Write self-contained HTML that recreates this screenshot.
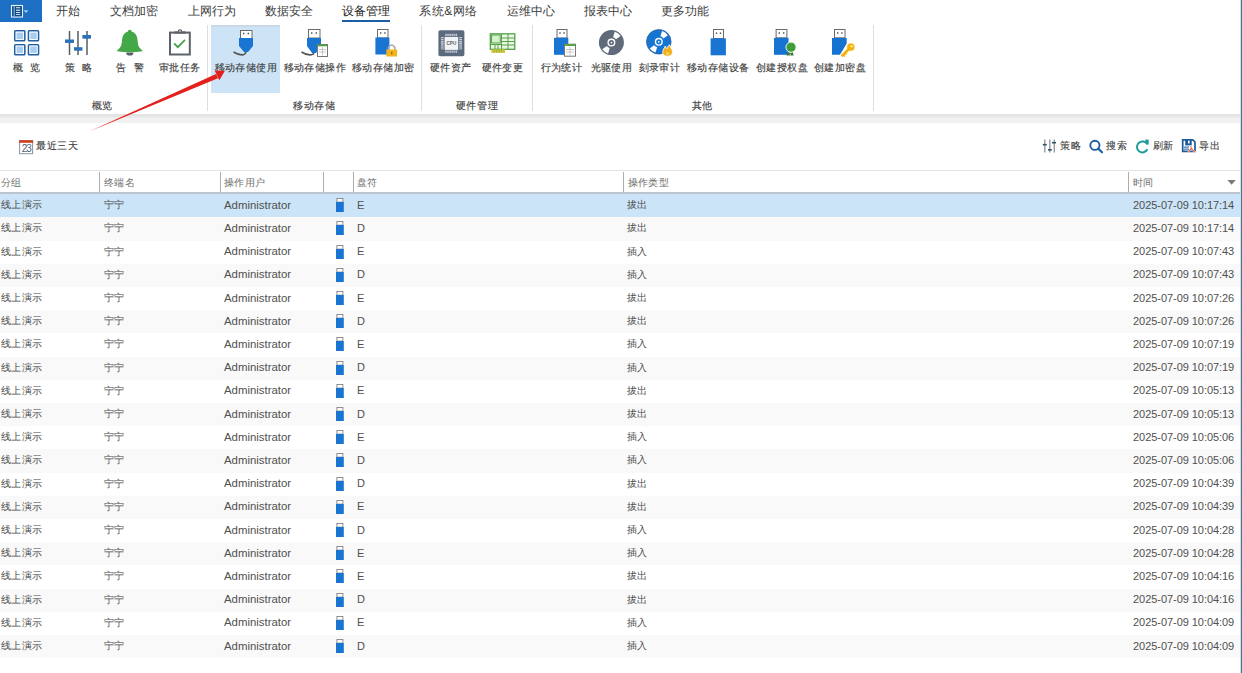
<!DOCTYPE html>
<html><head><meta charset="utf-8">
<style>
*{margin:0;padding:0;box-sizing:border-box}
html,body{width:1242px;height:673px;overflow:hidden;background:#fff}
body{position:relative;font-family:"Liberation Sans",sans-serif;color:#454545}
.a{position:absolute;white-space:nowrap;line-height:1}
.tab{font-size:12px;top:5px;color:#3c3c3c}
.lb{font-size:10px;letter-spacing:.45px;top:62.5px;color:#404040;-webkit-text-stroke:.15px #404040}
.gl{font-size:10px;letter-spacing:.7px;top:100.5px;color:#404040;-webkit-text-stroke:.15px #404040}
.sep{position:absolute;top:25px;width:1px;height:85.5px;background:#dedede}
svg{position:absolute;overflow:visible}
.hd{font-size:10px;letter-spacing:.4px;top:178px;color:#6e6e6e}
.cs{position:absolute;top:172px;width:1px;height:19.7px;background:#adadad}
.row{position:absolute;left:0;width:1240px;height:23.2px}
.row{color:#4a4a4a}.row .a{top:6px}

.sel{background:#cce4f7}.alt{background:#f9f9f9}
.us{left:336px;top:4px}
.c1{left:1px;font-size:10px;letter-spacing:.4px}
.c2{left:104px;font-size:10px;letter-spacing:.4px}
.row .c3{left:224px;font-size:11.4px;top:5.5px;color:#505050}
.row .c5{left:357px;font-size:11px;top:5.5px;color:#505050}
.c6{left:627px;font-size:10px;letter-spacing:.4px}
.row .c7{left:1133px;font-size:11px;top:5.5px;color:#505050;letter-spacing:-.05px}
</style></head><body>

<!-- top app button -->
<div class="a" style="left:0;top:0;width:42px;height:22px;background:#1d6fc4"></div>
<svg style="left:0;top:0" width="42" height="22">
  <rect x="11.5" y="5.5" width="11" height="11.5" fill="#0f4a86" stroke="#e6f3ff" stroke-width="1.1"/>
  <rect x="13.7" y="6" width="0.9" height="10.5" fill="#a8d2f5"/>
  <g fill="#d9e6f0"><rect x="16" y="7.2" width="4.2" height="1"/><rect x="16" y="9.6" width="4.2" height="1.2"/><rect x="16" y="12" width="4.2" height="1"/><rect x="16" y="14.1" width="4.2" height="0.9"/></g>
  <path d="M23.6 10.2 L28.4 10.2 L26 12.9 Z" fill="#9fd0f7"/>
</svg>

<!-- tabs -->
<div class="a tab" style="left:55.5px">开始</div>
<div class="a tab" style="left:110px">文档加密</div>
<div class="a tab" style="left:187.5px">上网行为</div>
<div class="a tab" style="left:264.5px">数据安全</div>
<div class="a tab" style="left:341.5px;color:#222">设备管理</div>
<div class="a" style="left:342px;top:19.5px;width:48px;height:2.5px;background:#1b5ea6"></div>
<div class="a tab" style="left:419px;letter-spacing:.6px">系统&amp;网络</div>
<div class="a tab" style="left:506.5px">运维中心</div>
<div class="a tab" style="left:584px">报表中心</div>
<div class="a tab" style="left:660.5px">更多功能</div>

<!-- highlight -->
<div class="a" style="left:211.2px;top:25px;width:68.9px;height:68.2px;background:#cde4f7;border-top:2.2px solid #c9d9e7"></div>

<!-- separators -->
<div class="sep" style="left:207px"></div>
<div class="sep" style="left:420.5px"></div>
<div class="sep" style="left:532px"></div>
<div class="sep" style="left:873px"></div>

<!-- ribbon icons -->
<!-- grid -->
<svg style="left:14px;top:30px" width="26" height="26">
  <rect x="0.75" y="0.75" width="10.1" height="10.1" rx="0.8" fill="#a9cdf1" stroke="#225f9f" stroke-width="1.5"/>
  <rect x="2.1" y="2.1" width="7.4" height="7.4" fill="none" stroke="#fff" stroke-width="0.9"/>
  <rect x="14.45" y="0.75" width="10.1" height="10.1" rx="0.8" fill="#a9cdf1" stroke="#225f9f" stroke-width="1.5"/>
  <rect x="15.799999999999999" y="2.1" width="7.4" height="7.4" fill="none" stroke="#fff" stroke-width="0.9"/>
  <rect x="0.75" y="14.65" width="10.1" height="10.1" rx="0.8" fill="#a9cdf1" stroke="#225f9f" stroke-width="1.5"/>
  <rect x="2.1" y="16.0" width="7.4" height="7.4" fill="none" stroke="#fff" stroke-width="0.9"/>
  <rect x="14.45" y="14.65" width="10.1" height="10.1" rx="0.8" fill="#a9cdf1" stroke="#225f9f" stroke-width="1.5"/>
  <rect x="15.799999999999999" y="16.0" width="7.4" height="7.4" fill="none" stroke="#fff" stroke-width="0.9"/>
</svg>
<!-- sliders -->
<svg style="left:64px;top:30px" width="28" height="26">
  <g stroke="#555c64" stroke-width="1.5">
    <line x1="5.5" y1="1" x2="5.5" y2="25"/>
    <line x1="14" y1="1" x2="14" y2="25"/>
    <line x1="23" y1="1" x2="23" y2="25"/>
  </g>
  <g fill="#2a71b9">
    <rect x="1" y="9.5" width="9" height="3.4"/>
    <rect x="10" y="17.2" width="8.4" height="3.5"/>
    <rect x="18.4" y="5" width="8.6" height="3.7"/>
  </g>
</svg>
<!-- bell -->
<svg style="left:116px;top:29px" width="28" height="28">
  <path d="M10.2 23.4 A3.6 3.2 0 0 0 17.4 23.4 Z" fill="#5a6068"/>
  <path d="M13.8 0.8 C15 0.8 15.6 1.6 15.6 2.5 C19.6 3.6 21.3 7 21.6 11.5 C21.9 16.5 23 19 26.5 21.5 L26.5 22.3 Q13.8 24 1 22.3 L1 21.5 C4.5 19 5.7 16.5 6 11.5 C6.3 7 8 3.6 12 2.5 C12 1.6 12.6 0.8 13.8 0.8 Z" fill="#45a848"/>
</svg>
<!-- clipboard -->
<svg style="left:168px;top:29px" width="24" height="28">
  <rect x="2" y="3.6" width="19.8" height="21.9" fill="#fff" stroke="#5d626a" stroke-width="2"/>
  <rect x="6.2" y="2.4" width="11.6" height="2.2" fill="#5d626a"/>
  <path d="M9.6 2.6 A2.4 2.4 0 0 1 14.4 2.6 Z" fill="#5d626a"/>
  <circle cx="12" cy="2" r="0.7" fill="#fff"/>
  <path d="M6.2 14.3 L9.8 18.2 L17 10.8" fill="none" stroke="#3fa346" stroke-width="1.7"/>
</svg>

<!-- usb with cable (selected) -->
<svg style="left:228px;top:25px" width="32" height="35">
  <rect x="12.5" y="5.5" width="11.5" height="8" fill="#fff" stroke="#6a6a6a" stroke-width="1"/>
  <rect x="15" y="7.8" width="1.4" height="1.4" fill="#444"/>
  <rect x="19.6" y="7.8" width="1.4" height="1.4" fill="#444"/>
  <path d="M11 13 L25 13 L25 21 L20 27 L16 27 L11 21 Z" fill="#1a74d2"/>
  <path d="M5.5 27 Q11 30.5 15.5 29.8 Q17.5 29.3 18 27" fill="none" stroke="#555" stroke-width="1.6"/>
</svg>
<!-- usb with cable + sheet -->
<svg style="left:300px;top:25px" width="32" height="35">
  <rect x="8.5" y="4.5" width="11.5" height="8.5" fill="#fff" stroke="#6a6a6a" stroke-width="1"/>
  <rect x="11" y="7.3" width="1.4" height="1.4" fill="#444"/>
  <rect x="15.6" y="7.3" width="1.4" height="1.4" fill="#444"/>
  <path d="M7 13 L21 13 L21 21 L16 28 L12 28 L7 21 Z" fill="#1a74d2"/>
  <path d="M1.5 27 Q7 30.5 11.5 29.8 Q13.5 29.3 14 28" fill="none" stroke="#555" stroke-width="1.6"/>
  <rect x="17.5" y="19.5" width="10" height="12" fill="#fff" stroke="#777" stroke-width="1"/>
  <rect x="17.5" y="19.5" width="10" height="1.8" fill="#53a13f"/>
  <g stroke="#bbb" stroke-width="0.8"><line x1="22.5" y1="22" x2="22.5" y2="30.5"/><line x1="19" y1="24.5" x2="26" y2="24.5"/><line x1="19" y1="27" x2="26" y2="27"/></g>
</svg>
<!-- usb + lock -->
<svg style="left:372px;top:25px" width="30" height="35">
  <rect x="5.5" y="4.5" width="10.5" height="8.5" fill="#fff" stroke="#6a6a6a" stroke-width="1"/>
  <rect x="8" y="7.3" width="1.4" height="1.4" fill="#444"/>
  <rect x="12.2" y="7.3" width="1.4" height="1.4" fill="#444"/>
  <rect x="3.4" y="12.5" width="14" height="17" fill="#1a74d2"/>
  <path d="M16.5 25 L16.5 22.5 Q19.7 17.5 22.9 22.5 L22.9 25" fill="none" stroke="#a9a9a9" stroke-width="1.6"/>
  <rect x="14.3" y="24.5" width="10.8" height="7" fill="#f2b51c"/>
  <rect x="19.2" y="26.8" width="1.1" height="2.4" fill="#8a5a00"/>
</svg>

<!-- cpu -->
<svg style="left:438px;top:30px" width="27" height="27">
  <rect x="0.4" y="0.2" width="26" height="26" rx="1.8" fill="#5c6a7e"/>
  <g stroke="#e2e7ee" stroke-dasharray="1.1 0.95">
    <line x1="7.4" y1="4.9" x2="19.8" y2="4.9" stroke-width="2.4"/>
    <line x1="7.4" y1="21.6" x2="19.8" y2="21.6" stroke-width="2.4"/>
    <line x1="4.3" y1="7.2" x2="4.3" y2="19.8" stroke-width="2.8"/>
    <line x1="22.6" y1="7.2" x2="22.6" y2="19.8" stroke-width="2.8"/>
  </g>
  <rect x="6.6" y="6.9" width="13.6" height="13" fill="#f1f4f7"/>
  <text x="13.4" y="15.3" font-size="4.6" font-family="Liberation Sans" text-anchor="middle" fill="#5a5f66" font-weight="bold">CPU</text>
</svg>
<!-- board -->
<svg style="left:489px;top:33px" width="28" height="21">
  <rect x="1.3" y="0.8" width="24.5" height="15.5" fill="#e8f6e2" stroke="#4a9a3c" stroke-width="1.2"/>
  <rect x="2.6" y="2" width="8.6" height="8" fill="#d6efcc" stroke="#4a9a3c" stroke-width="0.9"/>
  <g stroke="#4a9a3c" stroke-width="0.9" fill="none">
    <line x1="12.5" y1="1" x2="12.5" y2="16"/>
    <line x1="19" y1="1" x2="19" y2="16"/>
    <line x1="12.5" y1="5" x2="25.5" y2="5"/>
    <line x1="12.5" y1="8.5" x2="25.5" y2="8.5"/>
    <line x1="12.5" y1="12" x2="25.5" y2="12"/>
    <line x1="1.5" y1="11.5" x2="12.5" y2="11.5"/>
    <line x1="6" y1="11.5" x2="6" y2="16"/>
    <line x1="9" y1="11.5" x2="9" y2="16"/>
  </g>
  <rect x="2.5" y="16.3" width="13.5" height="3.5" fill="#c9c63a"/>
  <g stroke="#8fa52a" stroke-width="0.6"><line x1="5" y1="16.5" x2="5" y2="19.5"/><line x1="7.5" y1="16.5" x2="7.5" y2="19.5"/><line x1="10" y1="16.5" x2="10" y2="19.5"/><line x1="12.5" y1="16.5" x2="12.5" y2="19.5"/></g>
</svg>

<!-- usb + sheet -->
<svg style="left:550px;top:25px" width="30" height="35">
  <rect x="7" y="4.5" width="10" height="8.5" fill="#fff" stroke="#6a6a6a" stroke-width="1"/>
  <rect x="9.3" y="7.3" width="1.4" height="1.4" fill="#444"/>
  <rect x="13.3" y="7.3" width="1.4" height="1.4" fill="#444"/>
  <rect x="4" y="12.8" width="14.3" height="17" fill="#1a74d2"/>
  <rect x="14.5" y="19.2" width="11" height="12" fill="#fff" stroke="#777" stroke-width="1"/>
  <rect x="14.5" y="19.2" width="11" height="1.8" fill="#53a13f"/>
  <g stroke="#bbb" stroke-width="0.8"><line x1="20" y1="22" x2="20" y2="30.5"/><line x1="16" y1="24.5" x2="24" y2="24.5"/><line x1="16" y1="27" x2="24" y2="27"/></g>
</svg>
<!-- disc gray -->
<svg style="left:598px;top:30px" width="27" height="26">
  <circle cx="13.4" cy="12.6" r="12.5" fill="#5f6a7a"/>
  <path d="M15.07 7.15 L16.70 1.79 A11.3 11.3 0 0 1 22.54 5.96 L18.01 9.25 A5.7 5.7 0 0 0 15.07 7.15 Z" fill="#fff"/>
  <path d="M11.73 18.05 L10.10 23.41 A11.3 11.3 0 0 1 4.26 19.24 L8.79 15.95 A5.7 5.7 0 0 0 11.73 18.05 Z" fill="#fff"/>
  <circle cx="13.4" cy="12.6" r="4" fill="#fff"/>
  <circle cx="13.4" cy="12.6" r="2.6" fill="#5f6a7a"/>
  <circle cx="13.4" cy="12.6" r="0.9" fill="#fff"/>
</svg>
<!-- disc blue + flame -->
<svg style="left:645px;top:29px" width="30" height="28">
  <circle cx="13.8" cy="12.8" r="12.3" fill="#1675d3" stroke="#2a5b8c" stroke-width="0.7"/>
  <path d="M15.47 7.35 L17.07 2.09 A11.2 11.2 0 0 1 22.86 6.22 L18.41 9.45 A5.7 5.7 0 0 0 15.47 7.35 Z" fill="#fff"/>
  <path d="M12.13 18.25 L10.53 23.51 A11.2 11.2 0 0 1 4.74 19.38 L9.19 16.15 A5.7 5.7 0 0 0 12.13 18.25 Z" fill="#fff"/>
  <circle cx="13.8" cy="12.8" r="4" fill="#fff"/>
  <circle cx="13.8" cy="12.8" r="2.6" fill="#1675d3"/>
  <circle cx="13.8" cy="12.8" r="0.9" fill="#fff"/>
  <path d="M22.5 27.3 C18.5 27.3 17 24.5 18 21.5 C18.8 19.5 19.5 18.5 20.5 17 C21 19 21.5 19.5 22 19.8 C22.5 18 23.5 16.5 24.5 15.8 C25 18 26.5 19 27.2 21 C28.3 24.3 26.5 27.3 22.5 27.3 Z" fill="#f2ae1c" stroke="#fff" stroke-width="0.9"/>
  <path d="M22.7 26.3 C21 26.3 20.3 25 21 23.3 C21.6 24 22 23.8 22.3 22.5 C23.5 23.3 24.6 24.3 24.4 25.2 C24.2 26 23.5 26.3 22.7 26.3 Z" fill="#f7cf55"/>
</svg>
<!-- usb plain -->
<svg style="left:708px;top:25px" width="22" height="35">
  <rect x="5.5" y="4.5" width="10" height="9" fill="#fff" stroke="#6a6a6a" stroke-width="1"/>
  <rect x="7.8" y="7.5" width="1.4" height="1.4" fill="#444"/>
  <rect x="11.8" y="7.5" width="1.4" height="1.4" fill="#444"/>
  <rect x="2.6" y="13.3" width="15.3" height="17" fill="#1a74d2"/>
</svg>
<!-- usb + medal -->
<svg style="left:772px;top:25px" width="28" height="35">
  <rect x="4.1" y="4.5" width="10.8" height="8.3" fill="#fff" stroke="#6a6a6a" stroke-width="1"/>
  <rect x="6.6" y="7.3" width="1.4" height="1.4" fill="#444"/>
  <rect x="11" y="7.3" width="1.4" height="1.4" fill="#444"/>
  <rect x="2" y="12.9" width="14.5" height="16.9" fill="#1673d2"/>
  <path d="M15.2 27 L14.6 30.8 L16.4 30.2 L17.3 31.2 L18.3 27.5 Z M21 27 L21.6 30.8 L19.8 30.2 L18.9 31.2 L17.9 27.5 Z" fill="#3d7a3a"/>
  <circle cx="19" cy="22.2" r="5.1" fill="#3e9e3a" stroke="#fff" stroke-width="0.9"/>
</svg>
<!-- usb + key -->
<svg style="left:830px;top:25px" width="28" height="35">
  <rect x="4.5" y="4.5" width="10.5" height="8.3" fill="#fff" stroke="#6a6a6a" stroke-width="1"/>
  <rect x="7" y="7.3" width="1.4" height="1.4" fill="#444"/>
  <rect x="11.2" y="7.3" width="1.4" height="1.4" fill="#444"/>
  <path d="M2 12.9 L16.7 12.9 L16.7 18.5 L10 29.8 L2 29.8 Z" fill="#1673d2"/>
  <line x1="19.5" y1="23.5" x2="11.6" y2="31.2" stroke="#fff" stroke-width="4.2"/>
  <circle cx="20.8" cy="22.1" r="4.1" fill="#f3b20a" stroke="#fff" stroke-width="0.8"/>
  <line x1="19.5" y1="23.5" x2="11.6" y2="31.2" stroke="#f3b20a" stroke-width="2.6"/>
  <path d="M13.2 29.6 L15 31.4 M15 27.8 L16.6 29.4" stroke="#f3b20a" stroke-width="1.4"/>
  <circle cx="21.6" cy="21.2" r="1.2" fill="#fde48a"/>
</svg>

<!-- ribbon labels -->
<div class="a lb" style="left:12.5px;letter-spacing:.75px">概&nbsp;&nbsp;览</div>
<div class="a lb" style="left:64.5px;letter-spacing:.75px">策&nbsp;&nbsp;略</div>
<div class="a lb" style="left:116px;letter-spacing:.75px">告&nbsp;&nbsp;警</div>
<div class="a lb" style="left:159px">审批任务</div>
<div class="a lb" style="left:214.5px">移动存储使用</div>
<div class="a lb" style="left:283.5px">移动存储操作</div>
<div class="a lb" style="left:352px">移动存储加密</div>
<div class="a lb" style="left:430px">硬件资产</div>
<div class="a lb" style="left:481.5px">硬件变更</div>
<div class="a lb" style="left:540.5px">行为统计</div>
<div class="a lb" style="left:590.5px">光驱使用</div>
<div class="a lb" style="left:638.5px">刻录审计</div>
<div class="a lb" style="left:687px">移动存储设备</div>
<div class="a lb" style="left:756px">创建授权盘</div>
<div class="a lb" style="left:814px">创建加密盘</div>

<!-- group labels -->
<div class="a gl" style="left:91.5px">概览</div>
<div class="a gl" style="left:293px">移动存储</div>
<div class="a gl" style="left:455.5px">硬件管理</div>
<div class="a gl" style="left:691.5px">其他</div>

<!-- gray band -->
<div class="a" style="left:0;top:113.7px;width:1240px;height:9.3px;background:linear-gradient(#e3e3e3 0,#e5e5e5 2.3px,#ececec 3.6px,#f1f1f1 4.2px,#f1f1f1 8.3px,#f8f8f8 9.3px)"></div>

<!-- toolbar -->
<svg style="left:18px;top:139px" width="16" height="16">
  <rect x="1.6" y="1.7" width="13" height="13" fill="#fff" stroke="#8893a0" stroke-width="1"/>
  <rect x="1.1" y="1.2" width="14" height="2.6" fill="#cf3f26"/>
  <text x="8.3" y="13.1" font-size="10" font-family="Liberation Sans" text-anchor="middle" fill="#4f6478" letter-spacing="-1">23</text>
</svg>
<div class="a" style="left:36px;top:141px;font-size:10px;letter-spacing:.6px;color:#3c3c3c;-webkit-text-stroke:.1px #3c3c3c">最近三天</div>

<svg style="left:1042px;top:139px" width="15" height="15">
  <g stroke="#8d939a" stroke-width="1.3"><line x1="2.8" y1="0.6" x2="2.8" y2="13.6"/><line x1="7.8" y1="0.6" x2="7.8" y2="13.6"/><line x1="12.3" y1="0.6" x2="12.3" y2="13.6"/></g>
  <g fill="#2f5670"><rect x="0.8" y="4.9" width="4" height="1.6"/><rect x="6" y="10" width="3.8" height="1.6"/><rect x="10" y="2.9" width="4" height="1.6"/></g>
</svg>
<div class="a" style="left:1060px;top:141px;font-size:10px;letter-spacing:.6px;color:#3c3c3c;-webkit-text-stroke:.1px #3c3c3c">策略</div>
<svg style="left:1088px;top:139px" width="16" height="15">
  <circle cx="6.9" cy="6.3" r="4.6" fill="none" stroke="#1f5fa0" stroke-width="1.9"/>
  <line x1="10.2" y1="9.6" x2="14" y2="13.2" stroke="#1f5fa0" stroke-width="2.2" stroke-linecap="round"/>
</svg>
<div class="a" style="left:1106px;top:141px;font-size:10px;letter-spacing:.6px;color:#3c3c3c;-webkit-text-stroke:.1px #3c3c3c">搜索</div>
<svg style="left:1135px;top:139px" width="15" height="15">
  <path d="M12.3 5.3 A5.5 5.5 0 1 0 12.4 10.3" fill="none" stroke="#1e9b9d" stroke-width="2"/>
  <path d="M10 0.6 L13.8 0.8 L13.5 5.9 L11.5 5 Z" fill="#1e9b9d"/>
</svg>
<div class="a" style="left:1152.5px;top:141px;font-size:10px;letter-spacing:.6px;color:#3c3c3c;-webkit-text-stroke:.1px #3c3c3c">刷新</div>
<svg style="left:1181px;top:138px" width="16" height="16">
  <path d="M1.7 1.8 L11.8 1.8 L14 4 L14 13.3 L1.7 13.3 Z" fill="#fff" stroke="#1d5a9c" stroke-width="1.7"/>
  <rect x="4.2" y="1.8" width="6.5" height="5.6" fill="#1d5a9c"/>
  <rect x="7" y="2.6" width="1.6" height="2.8" fill="#fff"/>
  <rect x="3" y="8.6" width="5" height="1" fill="#1d5a9c"/>
  <rect x="3" y="10.6" width="5" height="1" fill="#1d5a9c"/>
  <path d="M6 14.5 L9.5 10.3 L9.2 7.8 L10.6 7.8 L11 10.3 L15 14 L13.5 14.3 L10.3 11.8 L7.8 14.7 Z" fill="#d9553a" stroke="#fff" stroke-width="0.5"/>
</svg>
<div class="a" style="left:1199px;top:141px;font-size:10px;letter-spacing:.6px;color:#3c3c3c;-webkit-text-stroke:.1px #3c3c3c">导出</div>

<!-- table header -->
<div class="a" style="left:0;top:170px;width:1240px;height:1px;background:#e2e2e2"></div>
<div class="a" style="left:0;top:192.4px;width:1240px;height:2px;background:#bcc5cf"></div>
<div class="cs" style="left:99px"></div>
<div class="cs" style="left:220px"></div>
<div class="cs" style="left:323px"></div>
<div class="cs" style="left:353px"></div>
<div class="cs" style="left:623px"></div>
<div class="cs" style="left:1128px"></div>
<div class="a hd" style="left:1px">分组</div>
<div class="a hd" style="left:104px">终端名</div>
<div class="a hd" style="left:224px">操作用户</div>
<div class="a hd" style="left:357px">盘符</div>
<div class="a hd" style="left:627.5px">操作类型</div>
<div class="a hd" style="left:1132.5px">时间</div>
<svg style="left:1227px;top:180px" width="10" height="6"><path d="M0.4 0 L8.8 0 L4.6 4.7 Z" fill="#7a7a7a"/></svg>


<div class="row sel" style="top:194.20px"><div class="a c1">线上演示</div><div class="a c2">宁宁</div><div class="a c3">Administrator</div><svg class="us" width="8" height="14"><rect x="0.9" y="0.5" width="6" height="3.6" fill="#fff" stroke="#777" stroke-width="0.8"/><rect x="0" y="4" width="7.8" height="10" fill="#1a74d2"/></svg><div class="a c5">E</div><div class="a c6">拔出</div><div class="a c7">2025-07-09 10:17:14</div></div>
<div class="row alt" style="top:217.40px"><div class="a c1">线上演示</div><div class="a c2">宁宁</div><div class="a c3">Administrator</div><svg class="us" width="8" height="14"><rect x="0.9" y="0.5" width="6" height="3.6" fill="#fff" stroke="#777" stroke-width="0.8"/><rect x="0" y="4" width="7.8" height="10" fill="#1a74d2"/></svg><div class="a c5">D</div><div class="a c6">拔出</div><div class="a c7">2025-07-09 10:17:14</div></div>
<div class="row" style="top:240.60px"><div class="a c1">线上演示</div><div class="a c2">宁宁</div><div class="a c3">Administrator</div><svg class="us" width="8" height="14"><rect x="0.9" y="0.5" width="6" height="3.6" fill="#fff" stroke="#777" stroke-width="0.8"/><rect x="0" y="4" width="7.8" height="10" fill="#1a74d2"/></svg><div class="a c5">E</div><div class="a c6">插入</div><div class="a c7">2025-07-09 10:07:43</div></div>
<div class="row alt" style="top:263.80px"><div class="a c1">线上演示</div><div class="a c2">宁宁</div><div class="a c3">Administrator</div><svg class="us" width="8" height="14"><rect x="0.9" y="0.5" width="6" height="3.6" fill="#fff" stroke="#777" stroke-width="0.8"/><rect x="0" y="4" width="7.8" height="10" fill="#1a74d2"/></svg><div class="a c5">D</div><div class="a c6">插入</div><div class="a c7">2025-07-09 10:07:43</div></div>
<div class="row" style="top:287.00px"><div class="a c1">线上演示</div><div class="a c2">宁宁</div><div class="a c3">Administrator</div><svg class="us" width="8" height="14"><rect x="0.9" y="0.5" width="6" height="3.6" fill="#fff" stroke="#777" stroke-width="0.8"/><rect x="0" y="4" width="7.8" height="10" fill="#1a74d2"/></svg><div class="a c5">E</div><div class="a c6">拔出</div><div class="a c7">2025-07-09 10:07:26</div></div>
<div class="row alt" style="top:310.20px"><div class="a c1">线上演示</div><div class="a c2">宁宁</div><div class="a c3">Administrator</div><svg class="us" width="8" height="14"><rect x="0.9" y="0.5" width="6" height="3.6" fill="#fff" stroke="#777" stroke-width="0.8"/><rect x="0" y="4" width="7.8" height="10" fill="#1a74d2"/></svg><div class="a c5">D</div><div class="a c6">拔出</div><div class="a c7">2025-07-09 10:07:26</div></div>
<div class="row" style="top:333.40px"><div class="a c1">线上演示</div><div class="a c2">宁宁</div><div class="a c3">Administrator</div><svg class="us" width="8" height="14"><rect x="0.9" y="0.5" width="6" height="3.6" fill="#fff" stroke="#777" stroke-width="0.8"/><rect x="0" y="4" width="7.8" height="10" fill="#1a74d2"/></svg><div class="a c5">E</div><div class="a c6">插入</div><div class="a c7">2025-07-09 10:07:19</div></div>
<div class="row alt" style="top:356.60px"><div class="a c1">线上演示</div><div class="a c2">宁宁</div><div class="a c3">Administrator</div><svg class="us" width="8" height="14"><rect x="0.9" y="0.5" width="6" height="3.6" fill="#fff" stroke="#777" stroke-width="0.8"/><rect x="0" y="4" width="7.8" height="10" fill="#1a74d2"/></svg><div class="a c5">D</div><div class="a c6">插入</div><div class="a c7">2025-07-09 10:07:19</div></div>
<div class="row" style="top:379.80px"><div class="a c1">线上演示</div><div class="a c2">宁宁</div><div class="a c3">Administrator</div><svg class="us" width="8" height="14"><rect x="0.9" y="0.5" width="6" height="3.6" fill="#fff" stroke="#777" stroke-width="0.8"/><rect x="0" y="4" width="7.8" height="10" fill="#1a74d2"/></svg><div class="a c5">E</div><div class="a c6">拔出</div><div class="a c7">2025-07-09 10:05:13</div></div>
<div class="row alt" style="top:403.00px"><div class="a c1">线上演示</div><div class="a c2">宁宁</div><div class="a c3">Administrator</div><svg class="us" width="8" height="14"><rect x="0.9" y="0.5" width="6" height="3.6" fill="#fff" stroke="#777" stroke-width="0.8"/><rect x="0" y="4" width="7.8" height="10" fill="#1a74d2"/></svg><div class="a c5">D</div><div class="a c6">拔出</div><div class="a c7">2025-07-09 10:05:13</div></div>
<div class="row" style="top:426.20px"><div class="a c1">线上演示</div><div class="a c2">宁宁</div><div class="a c3">Administrator</div><svg class="us" width="8" height="14"><rect x="0.9" y="0.5" width="6" height="3.6" fill="#fff" stroke="#777" stroke-width="0.8"/><rect x="0" y="4" width="7.8" height="10" fill="#1a74d2"/></svg><div class="a c5">E</div><div class="a c6">插入</div><div class="a c7">2025-07-09 10:05:06</div></div>
<div class="row alt" style="top:449.40px"><div class="a c1">线上演示</div><div class="a c2">宁宁</div><div class="a c3">Administrator</div><svg class="us" width="8" height="14"><rect x="0.9" y="0.5" width="6" height="3.6" fill="#fff" stroke="#777" stroke-width="0.8"/><rect x="0" y="4" width="7.8" height="10" fill="#1a74d2"/></svg><div class="a c5">D</div><div class="a c6">插入</div><div class="a c7">2025-07-09 10:05:06</div></div>
<div class="row" style="top:472.60px"><div class="a c1">线上演示</div><div class="a c2">宁宁</div><div class="a c3">Administrator</div><svg class="us" width="8" height="14"><rect x="0.9" y="0.5" width="6" height="3.6" fill="#fff" stroke="#777" stroke-width="0.8"/><rect x="0" y="4" width="7.8" height="10" fill="#1a74d2"/></svg><div class="a c5">D</div><div class="a c6">拔出</div><div class="a c7">2025-07-09 10:04:39</div></div>
<div class="row alt" style="top:495.80px"><div class="a c1">线上演示</div><div class="a c2">宁宁</div><div class="a c3">Administrator</div><svg class="us" width="8" height="14"><rect x="0.9" y="0.5" width="6" height="3.6" fill="#fff" stroke="#777" stroke-width="0.8"/><rect x="0" y="4" width="7.8" height="10" fill="#1a74d2"/></svg><div class="a c5">E</div><div class="a c6">拔出</div><div class="a c7">2025-07-09 10:04:39</div></div>
<div class="row" style="top:519.00px"><div class="a c1">线上演示</div><div class="a c2">宁宁</div><div class="a c3">Administrator</div><svg class="us" width="8" height="14"><rect x="0.9" y="0.5" width="6" height="3.6" fill="#fff" stroke="#777" stroke-width="0.8"/><rect x="0" y="4" width="7.8" height="10" fill="#1a74d2"/></svg><div class="a c5">D</div><div class="a c6">插入</div><div class="a c7">2025-07-09 10:04:28</div></div>
<div class="row alt" style="top:542.20px"><div class="a c1">线上演示</div><div class="a c2">宁宁</div><div class="a c3">Administrator</div><svg class="us" width="8" height="14"><rect x="0.9" y="0.5" width="6" height="3.6" fill="#fff" stroke="#777" stroke-width="0.8"/><rect x="0" y="4" width="7.8" height="10" fill="#1a74d2"/></svg><div class="a c5">E</div><div class="a c6">插入</div><div class="a c7">2025-07-09 10:04:28</div></div>
<div class="row" style="top:565.40px"><div class="a c1">线上演示</div><div class="a c2">宁宁</div><div class="a c3">Administrator</div><svg class="us" width="8" height="14"><rect x="0.9" y="0.5" width="6" height="3.6" fill="#fff" stroke="#777" stroke-width="0.8"/><rect x="0" y="4" width="7.8" height="10" fill="#1a74d2"/></svg><div class="a c5">E</div><div class="a c6">拔出</div><div class="a c7">2025-07-09 10:04:16</div></div>
<div class="row alt" style="top:588.60px"><div class="a c1">线上演示</div><div class="a c2">宁宁</div><div class="a c3">Administrator</div><svg class="us" width="8" height="14"><rect x="0.9" y="0.5" width="6" height="3.6" fill="#fff" stroke="#777" stroke-width="0.8"/><rect x="0" y="4" width="7.8" height="10" fill="#1a74d2"/></svg><div class="a c5">D</div><div class="a c6">拔出</div><div class="a c7">2025-07-09 10:04:16</div></div>
<div class="row" style="top:611.80px"><div class="a c1">线上演示</div><div class="a c2">宁宁</div><div class="a c3">Administrator</div><svg class="us" width="8" height="14"><rect x="0.9" y="0.5" width="6" height="3.6" fill="#fff" stroke="#777" stroke-width="0.8"/><rect x="0" y="4" width="7.8" height="10" fill="#1a74d2"/></svg><div class="a c5">E</div><div class="a c6">插入</div><div class="a c7">2025-07-09 10:04:09</div></div>
<div class="row alt" style="top:635.00px"><div class="a c1">线上演示</div><div class="a c2">宁宁</div><div class="a c3">Administrator</div><svg class="us" width="8" height="14"><rect x="0.9" y="0.5" width="6" height="3.6" fill="#fff" stroke="#777" stroke-width="0.8"/><rect x="0" y="4" width="7.8" height="10" fill="#1a74d2"/></svg><div class="a c5">D</div><div class="a c6">插入</div><div class="a c7">2025-07-09 10:04:09</div></div>

<!-- right border -->
<div class="a" style="left:1240px;top:0;width:1px;height:673px;background:#cfe0ec"></div><div class="a" style="left:1241px;top:0;width:1px;height:673px;background:#4f7292"></div>

<!-- red arrow -->
<svg style="left:0;top:0" width="1242" height="673">
  <path d="M89.2 131.4 L216.0 74.0 L218.0 78.2 Z" fill="#e3201b"/>
  <path d="M225 70.8 L214.6 70.4 L219.3 80.2 Z" fill="#e3201b"/>
</svg>


</body></html>
